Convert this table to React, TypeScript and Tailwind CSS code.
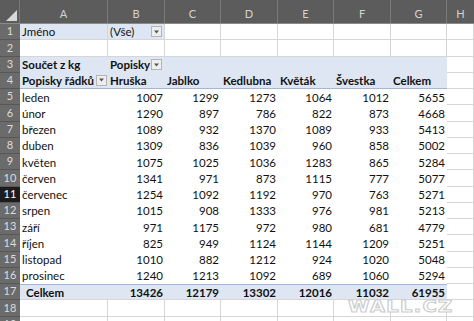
import React from "react";

const colW = [88, 57, 56, 57, 56, 57, 56];
const letters = ["A", "B", "C", "D", "E", "F", "G"];

const data: [string, number[]][] = [
  ["leden", [1007, 1299, 1273, 1064, 1012, 5655]],
  ["únor", [1290, 897, 786, 822, 873, 4668]],
  ["březen", [1089, 932, 1370, 1089, 933, 5413]],
  ["duben", [1309, 836, 1039, 960, 858, 5002]],
  ["květen", [1075, 1025, 1036, 1283, 865, 5284]],
  ["červen", [1341, 971, 873, 1115, 777, 5077]],
  ["červenec", [1254, 1092, 1192, 970, 763, 5271]],
  ["srpen", [1015, 908, 1333, 976, 981, 5213]],
  ["září", [971, 1175, 972, 980, 681, 4779]],
  ["říjen", [825, 949, 1124, 1144, 1209, 5251]],
  ["listopad", [1010, 882, 1212, 924, 1020, 5048]],
  ["prosinec", [1240, 1213, 1092, 689, 1060, 5294]],
];
const totals = [13426, 12179, 13302, 12016, 11032, 61955];
const heads = ["Hruška", "Jablko", "Kedlubna", "Květák", "Švestka", "Celkem"];

function Drop() {
  return (
    <span className="inline-flex items-center justify-center w-[11px] h-[11px] bg-[#eeeeee] border border-[#b5b5b5] shrink-0">
      <svg width="7" height="4" viewBox="0 0 7 4">
        <path d="M1 0.5 L6 0.5 L3.5 3.5 Z" fill="#555" />
      </svg>
    </span>
  );
}

function RowHead({ n, sel }: { n: number; sel?: boolean }) {
  return (
    <div
      className={
        "w-[20px] shrink-0 h-full flex items-center justify-center text-[11px] border-b border-[#575757] " +
        (sel ? "bg-[#1c1c1c] text-white" : "bg-[#6b6b6b] text-[#dcdcdc]")
      }
    >
      {n}
    </div>
  );
}

function Cell({
  w,
  className = "",
  children,
}: {
  w: number;
  className?: string;
  children?: React.ReactNode;
}) {
  return (
    <div
      style={{ width: w }}
      className={"shrink-0 h-full flex items-center whitespace-nowrap overflow-visible " + className}
    >
      {children}
    </div>
  );
}

const grid = "border-r border-b border-[#d6d6d6]";
const Hcell = () => <div className={"flex-1 h-full " + grid} />;

export default function App() {
  const rowCls = "flex h-[16.25px] w-[474px]";
  return (
    <div
      className="w-[474px] h-[321px] overflow-hidden bg-white relative text-[#111] text-[11.5px]"
      style={{ fontFamily: "Lato, 'Noto Sans', sans-serif" }}
    >
      {/* column header */}
      <div className="flex h-[24px] bg-[#5c5c5c] border-b border-[#8a8a8a]">
        <div className="w-[20px] shrink-0 h-full relative border-r border-[#777]">
          <div className="absolute right-[2px] bottom-[2px] w-0 h-0 border-l-[11px] border-l-transparent border-b-[11px] border-b-[#d8d8d8]" />
        </div>
        {letters.map((l, i) => (
          <div
            key={l}
            style={{ width: colW[i] }}
            className="shrink-0 h-full flex items-center justify-center pt-[6px] text-[11px] text-[#d4d4d4] border-r border-[#7a7a7a]"
          >
            {l}
          </div>
        ))}
        <div className="flex-1 h-full flex items-center justify-center pt-[6px] text-[11px] text-[#d4d4d4]">H</div>
      </div>

      {/* row 1 */}
      <div className={rowCls}>
        <RowHead n={1} />
        <Cell w={88} className={"bg-[#dde6f2] pl-[2px] " + grid}>Jméno</Cell>
        <Cell w={57} className={"bg-[#dde6f2] pl-[2px] justify-between pr-[2px] " + grid}>
          <span>(Vše)</span>
          <Drop />
        </Cell>
        {[56, 57, 56, 57, 56].map((w, i) => (
          <Cell key={i} w={w} className={grid} />
        ))}
        <Hcell />
      </div>

      {/* row 2 */}
      <div className={rowCls}>
        <RowHead n={2} />
        {colW.map((w, i) => (
          <Cell key={i} w={w} className={grid} />
        ))}
        <Hcell />
      </div>

      {/* row 3 */}
      <div className={rowCls}>
        <RowHead n={3} />
        <Cell w={88} className="bg-[#dde6f2] pl-[2px] font-bold">Součet z kg</Cell>
        <Cell w={57} className="bg-[#dde6f2] pl-[2px] font-bold gap-[1px]">
          <span>Popisky</span>
          <Drop />
        </Cell>
        {[56, 57, 56, 57, 56].map((w, i) => (
          <Cell key={i} w={w} className="bg-[#dde6f2]" />
        ))}
        <Hcell />
      </div>

      {/* row 4 */}
      <div className={rowCls}>
        <RowHead n={4} />
        <Cell w={88} className="bg-[#dde6f2] pl-[2px] pr-[1px] font-bold justify-between border-b border-[#9fb8d9]">
          <span>Popisky řádků</span>
          <Drop />
        </Cell>
        {heads.map((h, i) => (
          <Cell key={h} w={colW[i + 1]} className="bg-[#dde6f2] pl-[2px] font-bold border-b border-[#9fb8d9]">
            {h}
          </Cell>
        ))}
        <Hcell />
      </div>

      {data.map(([m, vals], r) => (
        <div key={m} className={rowCls}>
          <RowHead n={r + 5} sel={r + 5 === 11} />
          <Cell w={88} className="pl-[2px]">{m}</Cell>
          {vals.map((v, i) => (
            <Cell key={i} w={colW[i + 1]} className="justify-end pr-[2px]">
              {v}
            </Cell>
          ))}
          <Hcell />
        </div>
      ))}

      {/* row 17 */}
      <div className={rowCls}>
        <RowHead n={17} />
        <Cell w={88} className="bg-[#dde6f2] pl-[6px] font-bold border-t border-[#9fb8d9] border-b border-b-[#d6d6d6]">
          Celkem
        </Cell>
        {totals.map((v, i) => (
          <Cell key={i} w={colW[i + 1]} className="bg-[#dde6f2] justify-end pr-[2px] font-bold border-t border-[#9fb8d9] border-b border-b-[#d6d6d6]">
            {v}
          </Cell>
        ))}
        <Hcell />
      </div>

      {[18, 19].map((n) => (
        <div key={n} className={rowCls}>
          <RowHead n={n} />
          {colW.map((w, i) => (
            <Cell key={i} w={w} className={grid} />
          ))}
          <Hcell />
        </div>
      ))}

      <div
        className="absolute left-[348px] top-[299px] leading-[16px] text-[15px] font-bold tracking-[1px] text-white [-webkit-text-stroke:1px_#cdcdcd] scale-x-[1.3] origin-left"
        style={{ fontFamily: "'DejaVu Sans', sans-serif" }}
      >
        WALL.CZ
      </div>
    </div>
  );
}
